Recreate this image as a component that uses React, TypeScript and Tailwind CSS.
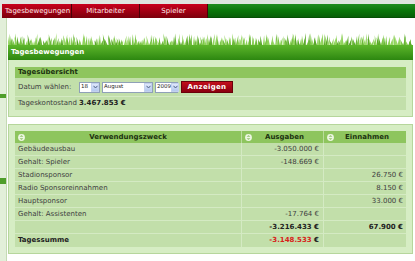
import React from 'react';

const font = { fontFamily: '"DejaVu Sans", Verdana, sans-serif' };

// deterministic grass blades for the banner
const blades = Array.from({ length: 260 }, (_, i) => {
  const r = (n: number) => Math.abs(Math.sin(i * 12.9898 + n * 78.233) * 43758.5453) % 1;
  const x = i * 1.56 + r(1) * 2;
  const h = 4 + r(2) * 8;
  const lean = (r(3) - 0.5) * 4;
  const shade = ['#7cc648', '#8fd25a', '#6bb838', '#9ad868', '#5aa82a'][Math.floor(r(4) * 5)];
  return { d: `M${x - 1} 12 L${x + lean} ${12 - h} L${x + 1.2} 12 Z`, shade };
});

const SortIcon = () => (
  <svg width="7" height="9" viewBox="0 0 7 9" className="shrink-0">
    <circle cx="3.5" cy="4.5" r="3.4" fill="#eef7e4" />
    <path d="M1.6 4 L3.5 1.8 L5.4 4 Z" fill="#a9d08a" />
    <path d="M1.6 5 L3.5 7.2 L5.4 5 Z" fill="#a9d08a" />
  </svg>
);

const Select = ({ value, w }: { value: string; w: string }) => (
  <div className={`${w} h-[11px] bg-white border border-[#8fa0b8] flex items-center justify-between pl-[1px]`}>
    <span className="text-[5.5px] text-[#222] leading-none whitespace-nowrap">{value}</span>
    <span className="w-[8px] h-[9px] shrink-0 bg-gradient-to-b from-[#dfe8fb] to-[#b4c8f0] border border-[#c4d2ee] flex items-center justify-center">
      <svg width="5" height="4" viewBox="0 0 5 4">
        <path d="M0.5 0.8 L2.5 3 L4.5 0.8" stroke="#4d6185" strokeWidth="1" fill="none" />
      </svg>
    </span>
  </div>
);

const rows = [
  { label: 'Gebäudeausbau', out: '-3.050.000 €', inc: '' },
  { label: 'Gehalt: Spieler', out: '-148.669 €', inc: '' },
  { label: 'Stadionsponsor', out: '', inc: '26.750 €' },
  { label: 'Radio Sponsoreinnahmen', out: '', inc: '8.150 €' },
  { label: 'Hauptsponsor', out: '', inc: '33.000 €' },
  { label: 'Gehalt: Assistenten', out: '-17.764 €', inc: '' },
];

export default function App() {
  return (
    <div className="w-[415px] h-[261px] bg-white overflow-hidden text-[7px] text-[#404040]" style={font}>
      <div className="h-[4px] bg-[#dfe5df]" />

      {/* top navigation */}
      <div className="h-[14px] flex">
        <div className="w-[2px] bg-[#dfe5df]" />
        {['Tagesbewegungen', 'Mitarbeiter', 'Spieler'].map((t, i) => (
          <div
            key={t}
            className={`${i === 0 ? 'w-[70px] justify-start pl-[3px]' : 'w-[68px] justify-center'} flex items-center bg-gradient-to-b from-[#c9001c] to-[#7c000c] border-r border-[#4a0006] text-[#fde8e8]`}
          >
            {t}
          </div>
        ))}
        <div className="flex-1 bg-gradient-to-b from-[#1f8d1f] via-[#0a760a] to-[#075f07] border-b border-[#055005]" />
      </div>

      <div className="flex">
        {/* cut-off sidebar */}
        <div className="w-[7px] h-[243px] flex flex-col bg-[#e2efd9] border-r border-[#c4dab4]">
          <div className="h-[76px]" />
          <div className="h-[4px] bg-[#4f9e2a]" />
          <div className="h-[80px]" />
          <div className="h-[6px] bg-[#4f9e2a]" />
        </div>

        <div className="w-[405px] ml-[1px] flex flex-col">
          <div className="h-[15px]" />
          <svg width="404" height="12" viewBox="0 0 404 12" className="block">
            {blades.map((b, i) => (
              <path key={i} d={b.d} fill={b.shade} />
            ))}
          </svg>
          <div className="h-[15px] bg-gradient-to-b from-[#5cb62a] to-[#2c8710] text-white font-bold flex items-center pl-[3px]">
            Tagesbewegungen
          </div>

          {/* Tagesübersicht */}
          <div className="bg-[#d6edc4] border-x border-b border-[#b6d69c] pt-[7px] pb-[6px] px-[6px]">
            <div className="h-[11px] bg-[#8ec55e] text-[#1c3210] font-bold flex items-center pl-[3px]">Tagesübersicht</div>
            <div className="h-[19px] bg-[#c2dfaa] flex items-center pl-[3px] border-b border-[#d4eac3]">
              <span className="w-[61px]">Datum wählen:</span>
              <div className="flex items-center gap-[2px]">
                <Select value="18" w="w-[21px]" />
                <Select value="August" w="w-[51px]" />
                <Select value="2009" w="w-[23px]" />
                <div className="ml-[1px] w-[52px] h-[12px] bg-gradient-to-b from-[#c20f1c] to-[#8a0010] border border-[#6a000a] text-white font-bold flex items-center justify-center tracking-[0.3px]">
                  Anzeigen
                </div>
              </div>
            </div>
            <div className="h-[13px] bg-[#c2dfaa] flex items-center pl-[3px]">
              <span className="w-[61px]">Tageskontostand</span>
              <span className="font-bold text-[#222]">3.467.853 €</span>
            </div>
          </div>

          <div className="h-[7px]" />

          {/* Verwendungszweck table */}
          <div className="bg-[#d6edc4] border border-[#b6d69c] pt-[6px] pb-[6px] px-[6px]">
            <div className="h-[12px] bg-[#8ec55e] text-[#1c3210] font-bold flex items-center">
              <div className="w-[227px] h-full flex items-center pl-[3px] border-r border-[#b9dc9c]">
                <SortIcon />
                <span className="flex-1 text-center pr-[10px]">Verwendungszweck</span>
              </div>
              <div className="w-[82px] h-full flex items-center pl-[3px] border-r border-[#b9dc9c]">
                <SortIcon />
                <span className="flex-1 text-center pr-[6px]">Ausgaben</span>
              </div>
              <div className="flex-1 h-full flex items-center pl-[3px]">
                <SortIcon />
                <span className="flex-1 text-center pr-[6px]">Einnahmen</span>
              </div>
            </div>

            {rows.map((r) => (
              <div key={r.label} className="h-[13px] bg-[#c2dfaa] flex items-center border-b border-[#d4eac3]">
                <div className="w-[227px] h-full flex items-center pl-[3px] border-r border-[#d4eac3]">{r.label}</div>
                <div className="w-[82px] h-full flex items-center justify-end pr-[4px] border-r border-[#d4eac3]">{r.out}</div>
                <div className="flex-1 h-full flex items-center justify-end pr-[3px]">{r.inc}</div>
              </div>
            ))}

            <div className="h-[13px] bg-[#c2dfaa] flex items-center border-b border-[#d4eac3] font-bold text-[#222]">
              <div className="w-[227px] h-full border-r border-[#d4eac3]" />
              <div className="w-[82px] h-full flex items-center justify-end pr-[4px] border-r border-[#d4eac3]">-3.216.433 €</div>
              <div className="flex-1 h-full flex items-center justify-end pr-[3px]">67.900 €</div>
            </div>
            <div className="h-[13px] bg-[#c2dfaa] flex items-center font-bold text-[#222]">
              <div className="w-[227px] h-full flex items-center pl-[3px] border-r border-[#d4eac3]">Tagessumme</div>
              <div className="w-[82px] h-full flex items-center justify-end pr-[4px] border-r border-[#d4eac3]">
                <span className="text-[#d8221a]">-3.148.533</span>&nbsp;€
              </div>
              <div className="flex-1 h-full" />
            </div>
          </div>
        </div>
      </div>
    </div>
  );
}
